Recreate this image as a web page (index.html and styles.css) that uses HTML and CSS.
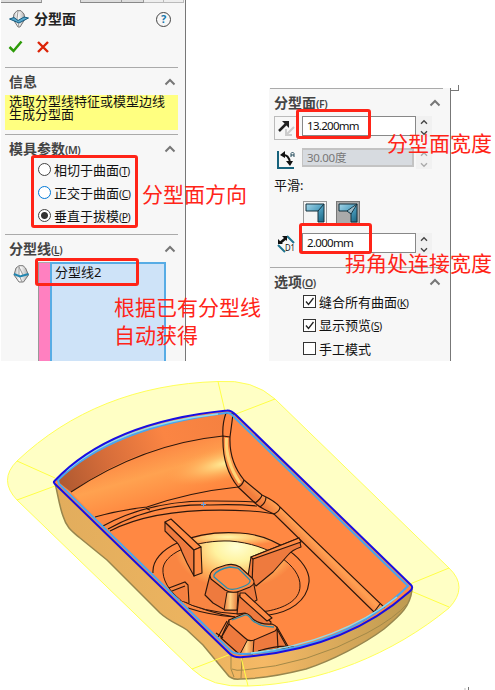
FILE: index.html
```html
<!DOCTYPE html>
<html lang="zh-CN">
<head>
<meta charset="utf-8">
<title>分型面</title>
<link rel="stylesheet" href="styles.css">
</head>
<body>
<svg class="defs" width="0" height="0">
  <defs>
    <symbol id="up" viewBox="0 0 12 8"><path d="M1.500 6.500 6 2l4.500 4.500" fill="none" stroke="currentColor" stroke-width="2"/></symbol>
    <symbol id="down" viewBox="0 0 12 8"><path d="M1.500 1.500 6 6l4.500-4.500" fill="none" stroke="currentColor" stroke-width="2"/></symbol>
    <linearGradient id="steel" x1="0" y1="0" x2="1" y2="1"><stop offset="0" stop-color="#a4d5e8"/><stop offset=".55" stop-color="#4b9cbd"/><stop offset="1" stop-color="#17637f"/></linearGradient>
    <linearGradient id="gem" x1="0" x2="1"><stop stop-color="#bbb"/><stop offset=".4" stop-color="#fff"/><stop offset="1" stop-color="#aaa"/></linearGradient>
    <symbol id="parting" viewBox="0 0 20 18"><path d="M8 .7h4L15 4l1 5-5 8H9L4 9l1-5z" fill="url(#gem)" stroke="#777"/><path d="m9 1-1 8 2 8" fill="none" stroke="#999"/><path d="M.5 9 5 7.500l4 3 6-3.500 4.500 1L10 13z" fill="#5aa8cc" stroke="#145c80"/></symbol>
    <symbol id="line" viewBox="0 0 16 18"><path d="M6 .7h4L12.500 3l3 7-5 7H6L1 10l2-7z" fill="url(#gem)" stroke="#777"/><path d="M6 1v9l3 7M6 2l4 8" fill="none" stroke="#999"/><path d="m1 9 6 2.500L15.500 9" fill="none" stroke="#2286b0" stroke-width="2"/></symbol>
  </defs>
</svg>
<main class="page">
  <div class="panels">
    <section class="panel left">
      <div class="tabs"><i></i><i class="active"></i><i></i><i></i><i class="light"></i><i class="light"></i></div>
      <header class="title">
        <svg width="20" height="18"><use href="#parting"/></svg>
        <h1>分型面</h1>
        <span class="help">?</span>
      </header>
      <div class="actions">
        <svg width="15" height="13" viewBox="0 0 15 13"><path d="m1.500 7 4 4 8-9.500" fill="none" stroke="#2d9b08" stroke-width="2.500"/></svg>
        <svg width="12" height="12" viewBox="0 0 12 12"><path d="m1 1 10 10M11 1 1 11" stroke="#dc2408" stroke-width="2.400"/></svg>
      </div>
      <section class="group info">
        <h2>信息<svg><use href="#up"/></svg></h2>
        <p class="message">选取分型线特征或模型边线<br>生成分型面</p>
      </section>
      <section class="group params">
        <h2>模具参数<small>(<u>M</u>)</small><svg><use href="#up"/></svg></h2>
        <ul class="radios">
          <li><i class="radio"></i>相切于曲面<small>(<u>T</u>)</small></li>
          <li><i class="radio hover"></i>正交于曲面<small>(<u>C</u>)</small></li>
          <li><i class="radio on"></i>垂直于拔模<small>(<u>P</u>)</small></li>
        </ul>
      </section>
      <section class="group lines">
        <h2>分型线<small>(<u>L</u>)</small><svg><use href="#up"/></svg></h2>
        <div class="selection">
          <svg width="16" height="18"><use href="#line"/></svg>
          <div class="swatch"></div>
          <div class="list">分型线2</div>
        </div>
      </section>
    </section>

    <section class="panel right">
      <section class="group surface">
        <h2>分型面<small>(<u>F</u>)</small><svg><use href="#up"/></svg></h2>
        <div class="field distance">
          <span class="flip"><svg width="18" height="19" viewBox="0 0 18 19"><path d="m17 8-7 7m-1-5v6h6" stroke="#ccc" stroke-width="2" fill="none"/><path d="m2 12 7-7" stroke="#222" stroke-width="2.500"/><path d="M5 2h7v7z" fill="#222"/></svg></span>
          <span class="input">13.200mm</span>
          <span class="spin"><svg><use href="#up"/></svg><svg><use href="#down"/></svg></span>
        </div>
        <div class="field angle">
          <span class="sign"><svg width="19" height="20" viewBox="0 0 19 20"><path d="M1 1v17h16" fill="none" stroke="#17627c" stroke-width="2"/><path d="M5 5q7-1 8 8" fill="none" stroke="#111" stroke-width="2"/><path d="m3 5 5-4v7zM9 11h7l-3 5z" fill="#111"/><path d="M14 7V3.500L15.500 2 17 3.500V7m-3-2h3" fill="none" stroke="#234a5b"/></svg></span>
          <span class="input off">30.00度</span>
          <span class="spin off"><svg><use href="#up"/></svg><svg><use href="#down"/></svg></span>
        </div>
        <div class="label">平滑:</div>
        <div class="smooth">
          <span class="choice"><svg width="20" height="20" viewBox="0 0 20 20"><path d="M1 1h18v18h-6V8H1z" fill="url(#steel)" stroke="#15313d"/><path d="m13 8 6-7" stroke="#15313d"/></svg></span>
          <span class="choice on"><svg width="20" height="20" viewBox="0 0 20 20"><path d="M1 1h18v18h-6v-8L9 8H1z" fill="url(#steel)" stroke="#15313d"/><path d="M9 8 19 1l-6 10M11 9l8-8" stroke="#15313d" fill="none"/><path d="m10 8 8-6-5 8z" fill="#9fb8c2"/></svg></span>
        </div>
        <div class="field corner">
          <span class="sign"><svg width="20" height="18" viewBox="0 0 20 18"><path d="m10 1 7 7M1 10l7 7" stroke="#20748f" stroke-width="2"/><path d="m3 8 6-5" stroke="#111" stroke-width="2.500"/><path d="M5 1h5v5zM1 4v5h5z" fill="#111"/><text x="8" y="16" class="tiny" textLength="10" lengthAdjust="spacingAndGlyphs">D1</text></svg></span>
          <span class="input">2.000mm</span>
          <span class="spin"><svg><use href="#up"/></svg><svg><use href="#down"/></svg></span>
        </div>
      </section>
      <section class="group options">
        <h2>选项<small>(<u>O</u>)</small><svg><use href="#up"/></svg></h2>
        <ul class="checks">
          <li><i class="box"><svg viewBox="0 0 11 11"><path d="m2 5.500 2.500 3 5-6.500"/></svg></i>缝合所有曲面<small>(<u>K</u>)</small></li>
          <li><i class="box"><svg viewBox="0 0 11 11"><path d="m2 5.500 2.500 3 5-6.500"/></svg></i>显示预览<small>(<u>S</u>)</small></li>
          <li><i class="box"></i>手工模式</li>
        </ul>
      </section>
    </section>
    <i class="crop-mark"></i>
  </div>

  <svg class="model" width="495" height="329" viewBox="0 361 495 329">
    <defs>
      <linearGradient id="wall" gradientUnits="userSpaceOnUse" x1="60" y1="490" x2="228" y2="425"><stop stop-color="#ad5830"/><stop offset=".3" stop-color="#d66d3a"/><stop offset=".65" stop-color="#fb8543"/><stop offset="1" stop-color="#f58140"/></linearGradient>
      <linearGradient id="cove" gradientUnits="userSpaceOnUse" x1="150" y1="443" x2="167" y2="502"><stop stop-color="#fb8040"/><stop offset=".5" stop-color="#ffa250"/><stop offset="1" stop-color="#ff873f"/></linearGradient>
      <radialGradient id="shine" gradientUnits="userSpaceOnUse" cx="0" cy="0" r="1" gradientTransform="translate(226 463) rotate(-14) scale(62 17)"><stop stop-color="#fff09a"/><stop offset=".4" stop-color="#ffc56e" stop-opacity=".85"/><stop offset="1" stop-color="#ffa250" stop-opacity="0"/></radialGradient>
      <radialGradient id="bowl" gradientUnits="userSpaceOnUse" cx="0" cy="0" r="1" gradientTransform="translate(236 547) scale(62 42)"><stop stop-color="#ffffd4"/><stop offset=".35" stop-color="#fff3a0"/><stop offset=".75" stop-color="#ffb15b"/><stop offset="1" stop-color="#f98542"/></radialGradient>
      <radialGradient id="lip" gradientUnits="userSpaceOnUse" cx="0" cy="0" r="1" gradientTransform="translate(228 537) scale(56 9)"><stop stop-color="#fff6a8"/><stop offset=".5" stop-color="#ffc670"/><stop offset="1" stop-color="#ff8843"/></radialGradient>
      <linearGradient id="shell" gradientUnits="userSpaceOnUse" x1="60" y1="0" x2="412" y2="0"><stop stop-color="#e2ad5d"/><stop offset=".45" stop-color="#eeb560"/><stop offset=".58" stop-color="#f5b966"/><stop offset="1" stop-color="#bd9a50"/></linearGradient>
      <linearGradient id="post" x1="0" x2="1"><stop stop-color="#e77b3c"/><stop offset=".45" stop-color="#ffd083"/><stop offset="1" stop-color="#e67839"/></linearGradient>
      <linearGradient id="lane" gradientUnits="userSpaceOnUse" x1="310" y1="553" x2="322" y2="541"><stop stop-color="#f17c3c"/><stop offset=".6" stop-color="#ffa052"/><stop offset="1" stop-color="#ff8743"/></linearGradient>
    </defs>
    <!-- parting surface -->
    <path class="flange" d="M17 461C70 411 137 384 218 381.500Q253 379 275 399L449 568Q469 587 449 608C393 654 320 684 248 686Q211 688 192 669L17 500Q-2 480 17 461Z"/>
    <path class="flange-edge" d="m17 461 38 17M17 500l38-14M218 381.500l7 30M275 399l-39 15M449 568l-39 16M449 607l-38-16"/>
    <!-- shell -->
    <path d="M55 483C58 495 59 505 63 516 67 529 73 532 80 538L107 560 160 613C170 622 178 624 187 630L203 645 227 674Q231 680 240 679C261 679 290 673 306 669 331 661 364 644 384 629 402 614 410 606 412 590L240 657Z" fill="url(#shell)" stroke="#97864e" stroke-width="1.500"/>
    <path d="M232 669Q236 671 244 670 307 665 367 633 395 618 408 603M231 656v13l3 8m8-20-1 21" fill="none" stroke="#a38948"/>
    <path class="flange-edge" d="m192 669 39-15M248 686l-7-29"/>
    <!-- interior -->
    <path d="M54 481Q110 422 227 410.500 231 410 236 415L411 585Q413 588 409 592 345 649 243 657 234 658 230 654L55 484Z" fill="#ff8843"/>
    <path d="M57 481Q110 428 227 413L223 436Q140 443 71 492Z" fill="url(#wall)"/>
    <path d="M71 492Q140 443 224 436 221 465 238 487 190 493 147 507 120 510 95 517Z" fill="url(#cove)"/>
    <path d="M71 492Q140 443 224 436 221 465 238 487 190 493 147 507 120 510 95 517Z" fill="url(#shine)"/>
    <path class="edge lane" d="M226 413Q222 424 223 437 222 467 238 487L255 503Q260 508 274 514L374 612 384 607 280 507Q275 501 262 495L244 480Q229 462 230 437L233 414Z"/>
    <path d="M226.500 438Q225 461 240 483" stroke="#ffd477" stroke-width="3" fill="none"/>
    <path class="edge" d="M71 492Q143 444 223 436l7 1M95 517Q120 510 147 507 190 492 238 487M103 526Q150 500 213 501q24 0 42 1M108 529Q154 503 210 505q26-1 47 1M110 531Q158 506 250 511q15 1 24 3M146 507q0 2 4 3M238 487q4-1 6-7M255 503q6-4 7-8M260 507q6-4 6-10M274 514q6-3 6-7M363 621q7-4 11-9l6-8"/>
    <path d="M203.500 502v5m-2.500-2.500h5" stroke="#5e9de0"/>
    <!-- bowl -->
    <path d="M170 551Q195 533 228 533 262 533 287 546L270 549Q224 534 180 552Z" fill="url(#lip)"/>
    <path class="edge" d="M153 573C151 548 193 530 240 533 276 535 311 561 309 582 307 602 289 612 269 615M180 600Q209 613 235 617"/>
    <path d="M163 568C166 551 198 540 230 541 270 544 301 566 300 586 300 601 283 608 268 611L239 614Q201 612 181 600C169 591 162 580 163 568Z" fill="url(#bowl)" class="bowl"/>
    <path d="m172 591 13-5 3 16-6-1z" fill="#f58040"/>
    <path class="edge" d="M188 608Q209 615 235 617M169 588l16-6 3 3 1 18M172 591l13-5"/>
    <!-- ribs -->
    <path class="face dark" d="m165 522 29 28v26l-7-13-5-11q-3-9-8-12l-9-9Z"/>
    <path class="face" d="m165 522 6-3 30 28-7 3Z"/>
    <path class="face" d="m194 550 7-3 1 26-8 3Z"/>
    <path class="face dark" d="m251 557 48-19 2 9q-9 3-13 8l-15 17-17 14-8-10Z"/>
    <path class="face" d="m251 557 48-19 2 4-48 17Z"/>
    <path class="edge" d="m253 559-1 25"/>
    <!-- centre boss -->
    <path class="face dark" d="M210 575 205 595 213 603 225 610 238 610 257 600 253 580Z"/>
    <path d="M227 592h11l-1 18h-13z" fill="url(#post)" class="outlined"/>
    <path class="face" d="M210 576Q210 571 217 568L226 565Q234 563 240 567L252 578Q257 583 250 587L240 591Q232 594 225 590L211 579Z"/>
    <path class="cyan" d="M214 575Q218 569 230 567l8 1 12 12q1 4-8 7-10 4-15 1l-13-11Z"/>
    <!-- lower rib and boss -->
    <path class="face dark" d="m239 595 32 27-1 8-16-9-9-8-8 1Z"/>
    <path class="face" d="m240 593 5 0 27 25-5 3-27-24Z"/>
    <path class="face dark" d="m229 620-8 18 18 16 14-1 24-4 12-1-12-21Z"/>
    <path d="m248 639 6 0-1 15h-13z" fill="url(#post)" class="outlined"/>
    <path class="face" d="M229 620 243 614Q248 612 253 619 260 625 272 624 280 627 275 631L254 640Q249 642 245 638L229 624Z"/>
    <path class="cyan" d="m232 620 13-5q3-1 7 5 8 7 22 7"/>
    <path class="edge" d="m218 637 9-16m-6 17 8-14m-13 9 7 5m54-9 1 20m-1-20 10 18m-29 4q24-7 36-4"/>
    <!-- parting line -->
    <path d="M58 480Q111 428 225 413q5-1 9 4L408 586q-65 64-165 68-9 0-12-3L59 484Z" fill="none" stroke="#48a5f0" stroke-width="2"/>
    <path d="M66 471Q119 425 218 414M251 653Q337 643 397 597" fill="none" stroke="#8fdded" stroke-width="1.500"/>
    <path d="M54.500 481Q110 422 227 410.500 231 410 236 415L411 585Q414 588 409 592 345 649 243 657 234 658 230 654L55 484Q53 482 54.500 481Z" fill="none" stroke="#180ee4" stroke-width="2"/>
    <path d="M464.500 689h1M468.500 687v3" stroke="#777"/>
  </svg>

  <div class="mark mark-radios"></div>
  <div class="mark mark-line"></div>
  <div class="mark mark-width"></div>
  <div class="mark mark-corner"></div>
  <div class="note note-direction">分型面方向</div>
  <div class="note note-auto">根据已有分型线<br>自动获得</div>
  <div class="note note-width">分型面宽度</div>
  <div class="note note-corner">拐角处连接宽度</div>
</main>
</body>
</html>
```
FILE: styles.css
```css
* { box-sizing: border-box; }
body { margin: 0; background: #fff; font: 13px/16px "Noto Sans", "Noto Sans CJK SC", sans-serif; color: #111; }
h1, h2, p, ul { margin: 0; padding: 0; }
ul { list-style: none; }
svg { display: block; flex: none; }
.defs { position: absolute; }
.page { position: relative; width: 495px; height: 690px; overflow: hidden; }
.panels { position: relative; display: flex; align-items: flex-end; gap: 83px; height: 361px; padding-left: 1px; }
.panel { background: #f7f7f7; border-right: 1px solid #777; overflow: hidden; }
.left { width: 185px; height: 361px; }
.right { width: 182px; height: 273px; }

.tabs { display: flex; height: 3px; }
.tabs i { width: 22px; border-right: 1px solid #999; border-bottom: 1px solid #888; background: #ddd; }
.tabs i:first-child { width: 41px; }
.tabs i:nth-child(3) { width: 41px; }
.tabs i.active { width: 39px; background: none; border-bottom: 0; }
.tabs i.light { background: #eee; border-color: #bbb; width: 20px; }
.title { display: flex; align-items: center; height: 32px; padding: 0 14px 0 8px; }
.title h1 { flex: 1; margin-left: 5px; font-size: 14px; line-height: 20px; font-weight: 700; color: #222; }
.help { width: 15px; height: 15px; border: 1.500px solid #444; border-radius: 50%; color: #1676ab; font-size: 11px; line-height: 12px; font-weight: 700; text-align: center; }
.actions { display: flex; align-items: center; gap: 14px; height: 32px; padding: 0 7px 9px; }

.group { margin: 0 7px 0 4px; border-top: 1px solid #aaa; }
.right .group { margin-left: 1px; margin-right: 7px; }
.group h2 { display: flex; align-items: center; height: 27px; padding: 0 2px 0 4px; font-size: 14px; line-height: 20px; font-weight: 700; color: #444; }
.group h2 svg { width: 12px; height: 8px; margin-left: auto; color: #777; }
small { font-size: 10.500px; font-weight: 400; letter-spacing: -0.500px; }
h2 small { padding-top: 2px; font-weight: 600; }
li small { padding-top: 2px; }
u { text-underline-offset: 1px; }
.info { height: 67px; }
.message { height: 35px; padding-left: 4px; background: #ffff80; line-height: 13px; white-space: nowrap; }
.params { height: 100px; }
.params h2 { height: 27px; }
.radios { display: grid; grid-auto-rows: 23px; margin-left: 33px; margin-top: -4px; }
.radios li, .checks li { display: flex; align-items: center; white-space: nowrap; }
.radio { width: 13px; height: 13px; margin-right: 3px; border: 1px solid #444; border-radius: 50%; background: #fff; }
.radio.hover { border-color: #0078d7; }
.radio.on { background: radial-gradient(circle, #333 0 3px, #fff 4px); }
.selection { display: flex; height: 99px; }
.selection svg { margin: 3px 0 0 8px; }
.swatch { width: 12px; margin-left: 9px; background: #ff80c0; border-left: 1px solid #999; border-top: 1px solid #aaa; }
.list { width: 116px; border: 2px solid #57ace5; border-bottom: 0; background: #cee3f8; padding-left: 3px; line-height: 16px; }

.surface { height: 179px; }
.field { display: flex; height: 25px; padding-left: 4px; }
.flip, .sign { flex: none; width: 24px; margin-right: 4px; }
.flip { display: grid; place-items: center; height: 24px; border: 1px solid #bbb; }
.sign { padding: 2px 0 0 3px; }
.input { width: 114px; height: 20px; padding-left: 4px; border: 1px solid #888; background: #fff; font-size: 11.500px; line-height: 18px; letter-spacing: -0.700px; }
.input.off { width: 112px; height: 19px; margin-right: 2px; background: #d7dbe0; border: 2px solid #c3c3c3; border-left-width: 1px; line-height: 15px; color: #777; letter-spacing: -0.300px; }
.spin { display: flex; flex-direction: column; justify-content: space-between; width: 16px; height: 21px; padding: 3px 4px 1px; background: #f1f1f1; color: #444; }
.spin svg { width: 8px; height: 6px; }
.spin.off { color: #aaa; }
.angle { margin-top: 7px; height: 28px; }
.label { height: 21px; padding-left: 4px; line-height: 18px; }
.smooth { display: flex; gap: 9px; height: 28px; padding: 4px 0 0 33px; }
.choice { display: grid; place-items: center; width: 24px; height: 24px; border: 1px solid #999; background: #f5f5f5; }
.choice.on { background: #aaa; border-color: #777; }
.corner { margin-top: 8px; }
.tiny { font-size: 8.500px; fill: #111; }
.checks { display: grid; grid-auto-rows: 23.500px; margin: -5px 0 0 33px; }
.box { width: 13px; height: 13px; margin-right: 3px; border: 1px solid #333; background: #fff; }
.box svg { width: 11px; height: 11px; fill: none; stroke: #222; stroke-width: 1.300; }
.crop-mark { position: absolute; left: 450px; top: 85px; width: 9px; height: 6px; border: solid #777; border-width: 0 1px 1px 0; }

.mark { position: absolute; border: 3px solid #ff2418; border-radius: 3px; }
.mark-radios { left: 31px; top: 155px; width: 107px; height: 73px; }
.mark-line { left: 35px; top: 258px; width: 104px; height: 28px; }
.mark-width { left: 296px; top: 109px; width: 75px; height: 30px; }
.mark-corner { left: 299px; top: 223px; width: 73px; height: 31px; }
.note { position: absolute; color: #ff2418; font: 400 21px/28px "Noto Sans CJK SC", sans-serif; white-space: nowrap; }
.note-direction { left: 142px; top: 179px; }
.note-auto { left: 114px; top: 292px; }
.note-width { left: 387px; top: 128px; }
.note-corner { left: 345px; top: 248px; }

.model { overflow: hidden; }
.flange { fill: #ffffc5; stroke: #ffff58; }
.flange-edge { fill: none; stroke: #ffff46; }
.edge { fill: none; stroke: #2c160c; stroke-width: 1.150; }
.lane { fill: url(#lane); }
.bowl, .outlined { stroke: #2c160c; }
.face { fill: #ff8b45; stroke: #2c160c; stroke-width: 1.100; stroke-linejoin: round; }
.face.dark { fill: #ee7a3e; }
.cyan { fill: none; stroke: #288fae; stroke-width: 1.300; }
```
